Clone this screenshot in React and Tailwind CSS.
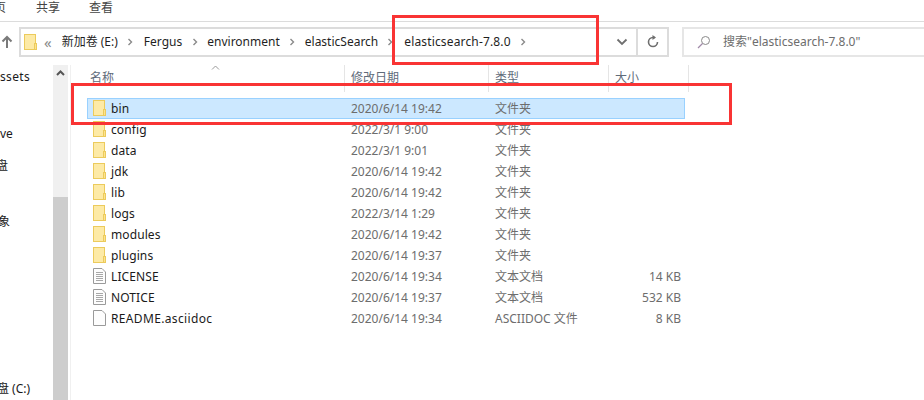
const font = { fontFamily: '"Noto Sans", "Noto Sans CJK SC", sans-serif' };

function Folder() {
  return (
    <svg width="13" height="17" viewBox="0 0 13 17" className="shrink-0">
      <rect x="0.5" y="0.5" width="11" height="15" fill="#fde38f" stroke="#eccb5c" />
      <rect x="1" y="1" width="10" height="14" fill="#fdeaa6" />
      <rect x="10.5" y="9.5" width="2" height="6" fill="#fde38f" stroke="#eccb5c" />
    </svg>
  );
}

function Doc({ lines }) {
  return (
    <svg width="13" height="17" viewBox="0 0 13 17" className="shrink-0">
      <path d="M0.5 0.5H9L12.5 4V15.5H0.5Z" fill="#fdfdfd" stroke="#9a9a9a" />
      {lines &&
        [4, 6, 8, 10, 12].map((y) => (
          <rect key={y} x="3" y={y} width="7" height="1" fill="#a8a8a8" />
        ))}
    </svg>
  );
}

function Chevron() {
  return (
    <svg width="6" height="8" viewBox="0 0 6 8" className="shrink-0">
      <path d="M1.5 1L4.5 4L1.5 7" fill="none" stroke="#8a8a8a" strokeWidth="1.4" />
    </svg>
  );
}

const rows = [
  ["bin", "2020/6/14 19:42", "文件夹", "", "f"],
  ["config", "2022/3/1 9:00", "文件夹", "", "f"],
  ["data", "2022/3/1 9:01", "文件夹", "", "f"],
  ["jdk", "2020/6/14 19:42", "文件夹", "", "f"],
  ["lib", "2020/6/14 19:42", "文件夹", "", "f"],
  ["logs", "2022/3/14 1:29", "文件夹", "", "f"],
  ["modules", "2020/6/14 19:42", "文件夹", "", "f"],
  ["plugins", "2020/6/14 19:37", "文件夹", "", "f"],
  ["LICENSE", "2020/6/14 19:34", "文本文档", "14 KB", "t"],
  ["NOTICE", "2020/6/14 19:37", "文本文档", "532 KB", "t"],
  ["README.asciidoc", "2020/6/14 19:34", "ASCIIDOC 文件", "8 KB", "d"],
];

function Row({ r, selected }) {
  return (
    <div
      className={`flex items-center h-[21px] w-[598px] text-[12px] border ${
        selected ? "bg-[#cce8ff] border-[#99d1ff]" : "border-transparent"
      }`}
    >
      <div className="w-[263px] pl-[5px] flex items-center gap-[5px] text-[#1a1a1a] tracking-[0.1px]">
        {r[4] === "f" ? <Folder /> : <Doc lines={r[4] === "t"} />}
        <span className={r[4] === "d" ? "tracking-[0.35px]" : ""}>{r[0]}</span>
      </div>
      <div className="w-[144px] text-[#6d6d6d]">{r[1]}</div>
      <div className="w-[116px] text-[#6d6d6d]">{r[2]}</div>
      <div className="w-[70px] text-right text-[#6d6d6d]">{r[3]}</div>
    </div>
  );
}

function Head({ w, children, className = "" }) {
  return (
    <div className={`h-[27px] pl-[6px] border-r border-[#e5e5e5] text-[12px] text-[#5f6b7a] ${w} ${className}`}>
      {children}
    </div>
  );
}

export default function App() {
  return (
    <div style={font} className="relative w-[924px] h-[400px] bg-white overflow-hidden">
      {/* Ribbon */}
      <div className="h-[22px] border-b border-[#dcdcdc] flex items-start text-[12px] leading-[15px] text-[#444]">
        <span className="w-[36px] -ml-[6px] pr-0 shrink-0">页</span>
        <span className="w-[53px] ml-[6px] shrink-0">共享</span>
        <span>查看</span>
      </div>

      {/* Address row */}
      <div className="flex items-center h-[30px] mt-[5px]">
        <svg width="14" height="14" viewBox="0 0 14 14" className="mr-[5px] shrink-0">
          <path d="M7 2V13M2.5 6.5L7 2L11.5 6.5" fill="none" stroke="#7a7a7a" strokeWidth="2" />
        </svg>
        <div className="w-[650px] h-[30px] border-2 border-[#dcdcdc] flex items-center text-[12px] text-[#1f1f1f]">
          <div className="ml-[3px] mr-[7px]">
            <Folder />
          </div>
          <span className="text-[#8a8a8a] text-[15px] leading-none mr-[10px]">«</span>
          <span className="mr-[9px]">新加卷 (E:)</span>
          <Chevron />
          <span className="ml-[11px] mr-[10px]">Fergus</span>
          <Chevron />
          <span className="ml-[9px] mr-[9px]">environment</span>
          <Chevron />
          <span className="ml-[10px] mr-[9px]">elasticSearch</span>
          <Chevron />
          <span className="ml-[11px] mr-[9px] tracking-[0.15px]">elasticsearch-7.8.0</span>
          <Chevron />
          <div className="flex-1" />
          <svg width="12" height="8" viewBox="0 0 12 8" className="mr-[8px] shrink-0">
            <path d="M1.5 1.5L6 6L10.5 1.5" fill="none" stroke="#6f6f6f" strokeWidth="1.8" />
          </svg>
          <div className="w-[31px] h-full border-l-2 border-[#dcdcdc] flex items-center justify-center">
            <svg width="14" height="14" viewBox="0 0 14 14">
              <path d="M11.5 7A4.5 4.5 0 1 1 7 2.5H9" fill="none" stroke="#6f6f6f" strokeWidth="1.6" />
              <path d="M6.5 0L10 2.5L6.5 5Z" fill="#6f6f6f" />
            </svg>
          </div>
        </div>
        <div className="ml-[13px] flex-1 h-[30px] border-y-2 border-l-2 border-[#e6e6e6] flex items-center text-[12px] text-[#6d6d6d]">
          <svg width="14" height="14" viewBox="0 0 14 14" className="ml-[13px] mr-[12px] shrink-0">
            <circle cx="8.5" cy="5.5" r="4" fill="none" stroke="#8a8a8a" />
            <path d="M5.5 8.5L1 13" stroke="#a08aa8" strokeWidth="1.2" />
          </svg>
          <span>搜索"elasticsearch-7.8.0"</span>
        </div>
      </div>

      {/* Body */}
      <div className="flex mt-[8px] h-[335px]">
        <div className="w-[53px] text-[12px] text-[#1a1a1a] overflow-hidden relative shrink-0">
          <div className="flex flex-col">
            <div className="h-[27px] pt-[3px] tracking-[0.35px]">ssets</div>
            <div className="h-[28px]" />
            <div className="h-[28px] pt-[5px]">ve</div>
            <div className="h-[32px] pt-[9px]"><span className="-ml-[4px] block">盘</span></div>
            <div className="h-[33px]" />
            <div className="h-[30px]"><span className="-ml-[2px] block">象</span></div>
          </div>
          <div className="absolute bottom-[2px] left-0 whitespace-nowrap"><span className="-ml-[3px] block">盘 (C:)</span></div>
        </div>
        <div className="w-[15px] bg-[#f0f0f0] shrink-0 flex flex-col">
          <div className="h-[15px] flex items-center justify-center">
            <svg width="9" height="6" viewBox="0 0 9 6">
              <path d="M1 5L4.5 1.5L8 5" fill="none" stroke="#555" strokeWidth="2" />
            </svg>
          </div>
          <div className="h-[117px]" />
          <div className="flex-1 bg-[#cdcdcd]" />
        </div>
        <div className="w-[3px] border-r border-[#f0f0f0] shrink-0" />

        <div className="flex-1 relative">
          <div className="flex pl-[12px] leading-[25px]">
            <Head w="w-[262px]" className="relative pl-[7px]">
              名称
              <svg width="9" height="5" viewBox="0 0 9 5" className="absolute left-[128px] top-0">
                <path d="M1 4.5L4.5 1L8 4.5" fill="none" stroke="#9a9a9a" />
              </svg>
            </Head>
            <Head w="w-[144px]">修改日期</Head>
            <Head w="w-[120px]">类型</Head>
            <Head w="w-[80px]">大小</Head>
          </div>
          <div className="pl-[16px] pt-[6px]">
            {rows.map((r, i) => (
              <Row key={r[0]} r={r} selected={i === 0} />
            ))}
          </div>
        </div>
      </div>

      {/* Annotations */}
      <div className="absolute left-[392px] top-[15px] w-[207px] h-[50px] border-[3px] border-[#f93434]" />
      <div className="absolute left-[71px] top-[83px] w-[661px] h-[42px] border-[3px] border-[#f93434]" />
    </div>
  );
}
